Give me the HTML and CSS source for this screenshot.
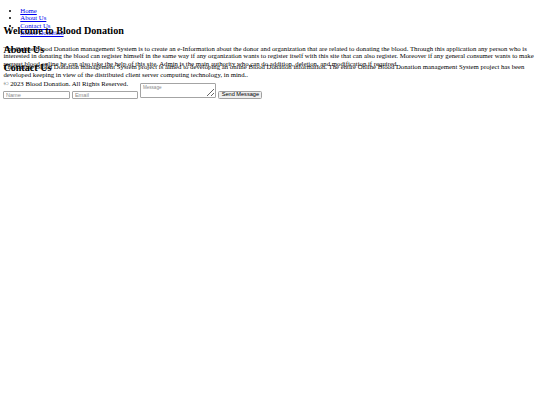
FILE: index.html
```html
<!DOCTYPE html>
<html lang="en">
<head>
<meta charset="utf-8">
<title>Blood Donation</title>
<link rel="stylesheet" href="styles.css">
</head>
<body>
<header class="site-header">
  <nav>
    <ul class="nav-list">
      <li><a href="#home">Home</a></li>
      <li><a href="#about">About Us</a></li>
      <li><a href="#contact">Contact Us</a></li>
      <li><a href="#donate">Blood Donation</a></li>
    </ul>
  </nav>
</header>
<section class="panel" id="home">
  <h2 class="panel-title">Welcome to Blood Donation</h2>
  <p class="panel-text">The Online Blood Donation management System is to create an e-Information about the donor and organization that are related to donating the blood. Through this application any person who is interested in donating the blood can register himself in the same way if any organization wants to register itself with this site that can also register. Moreover if any general consumer wants to make request blood online he can also take the help of this site. Admin is the main authority who can do addition, deletion, and modification if required.</p>
</section>
<section class="panel" id="about">
  <h2 class="panel-title">About Us</h2>
  <p class="panel-text">The Online Blood Donation management System project is aimed to developing an online Blood Donation information. The entire Online Blood Donation management System project has been developed keeping in view of the distributed client server computing technology, in mind..</p>
</section>
<section class="panel panel-contact" id="contact">
  <h2 class="panel-title">Contact Us</h2>
  <form class="contact-form">
    <input class="field field-name" type="text" placeholder="Name">
    <input class="field field-email" type="email" placeholder="Email">
    <textarea class="field-area" placeholder="Message"></textarea>
    <button class="send-btn" type="submit">Send Message</button>
  </form>
</section>
<footer class="site-footer">
  <p class="copyright">© 2023 Blood Donation. All Rights Reserved.</p>
</footer>
</body>
</html>
```

FILE: styles.css
```css
html {
  background: #fff;
}

body {
  box-sizing: border-box;
  min-height: 100vh;
  margin: 0;
  padding: 0 3.375px;
  font-family: "Liberation Serif", "Times New Roman", serif;
  font-size: 6.75px;
  line-height: 1.1;
  color: #000;
  background: #fff;
}

a {
  color: #0000ee;
}

.site-header {
  box-sizing: border-box;
  height: 25.3px;
  padding-top: 6.7px;
}

.nav-list {
  margin: 0;
  padding-left: 16.9px;
}

.panel {
  height: 18.4px;
}

.panel-contact {
  position: relative;
  height: 17.6px;
}

.panel-title {
  margin: 0;
  font-size: 10.125px;
  font-weight: bold;
  line-height: 1.1;
}

.panel-text {
  margin: 8.3px 0 0;
}

.contact-form {
  display: flex;
  align-items: flex-end;
  gap: 2px;
  margin-top: 9.3px;
}

.field,
.field-area,
.send-btn {
  box-sizing: border-box;
  margin: 0;
  font-family: "Liberation Sans", Arial, sans-serif;
  font-size: 5.625px;
  color: #000;
}

.field {
  height: 8px;
  padding: 0 1.5px;
  border: 1px solid #a4a4a4;
  border-radius: 1px;
  background: #fff;
}

.field-name {
  width: 67px;
}

.field-email {
  width: 66px;
}

.field::placeholder,
.field-area::placeholder {
  color: #8a8a8a;
}

.field-area {
  width: 76px;
  height: 15px;
  margin-bottom: 1.5px;
  padding: 1px 1.5px;
  border: 1px solid #a4a4a4;
  border-radius: 1px;
  resize: both;
  font-size: 4.6px;
  background: #fff;
}

.send-btn {
  width: 44px;
  height: 8.5px;
  padding: 0;
  border: 1px solid #a0a0a0;
  border-radius: 1.5px;
  background: #efefef;
  line-height: 1;
}

.site-footer {
  margin: 0;
}

.copyright {
  margin: 0;
}
```
